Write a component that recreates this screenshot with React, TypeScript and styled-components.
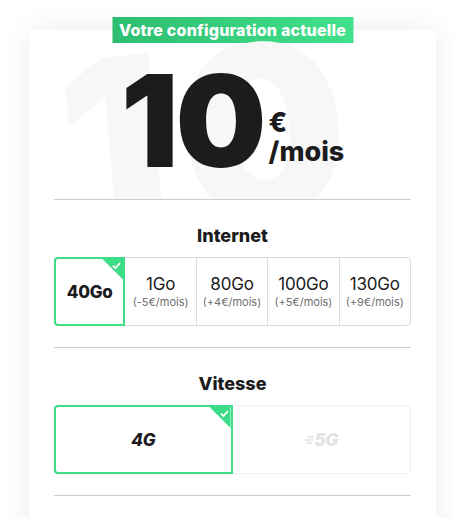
import styled, { createGlobalStyle } from "styled-components";

const GREEN = "#3ddc86";

const GlobalStyle = createGlobalStyle`
  body {
    margin: 0;
    background: #ffffff;
    font-family: Inter, "Noto Sans", sans-serif;
    color: #1c1b1d;
  }
`;

const Page = styled.div`
  padding: 30px 16px 0 29px;
`;

const Card = styled.div`
  position: relative;
  background: #ffffff;
  box-shadow: 0 0 28px rgba(0, 0, 0, 0.08);
  padding: 0 25px 40px;
`;

const Badge = styled.div`
  position: absolute;
  top: -13px;
  left: 50%;
  transform: translateX(-50%);
  height: 26px;
  padding: 0 7px;
  display: flex;
  align-items: center;
  white-space: nowrap;
  background: linear-gradient(90deg, #2ebd70, #41e28c);
  color: #ffffff;
  font-size: 16px;
  font-weight: 800;
  letter-spacing: 0.2px;
`;

const Header = styled.div`
  position: relative;
  height: 170px;
  overflow: hidden;
  border-bottom: 1px solid #cdcdcd;
  display: flex;
  justify-content: center;
  align-items: flex-start;
  padding-top: 27px;
  box-sizing: border-box;
`;

const Watermark = styled.div`
  position: absolute;
  top: -14px;
  left: 6px;
  font-size: 236px;
  line-height: 1;
  font-weight: 900;
  letter-spacing: 12px;
  color: #f7f7f7;
  transform: rotate(-5deg);
  user-select: none;
`;

const Price = styled.div`
  position: relative;
  display: flex;
  align-items: flex-end;
  gap: 5px;
`;

const Amount = styled.span`
  font-size: 128px;
  line-height: 1;
  font-weight: 900;
  letter-spacing: -3px;
`;

const Suffix = styled.div`
  display: flex;
  flex-direction: column;
  font-size: 27px;
  line-height: 29px;
  font-weight: 800;
  margin-bottom: 19px;
`;

const Section = styled.div`
  display: flex;
  flex-direction: column;
  align-items: stretch;
  padding: 25px 0 21px;
  border-bottom: 1px solid #cdcdcd;
`;

const Title = styled.h2`
  margin: 0 0 10px;
  text-align: center;
  font-size: 18px;
  line-height: 22px;
  font-weight: 800;
`;

const Group = styled.div<{ cols: number }>`
  display: grid;
  grid-template-columns: repeat(${(p) => p.cols}, 1fr);
`;

const Option = styled.div<{ selected?: boolean; disabled?: boolean }>`
  position: relative;
  height: 69px;
  box-sizing: border-box;
  display: flex;
  flex-direction: column;
  align-items: center;
  justify-content: center;
  margin-left: -1px;
  border: ${(p) =>
    p.selected
      ? `2px solid ${GREEN}`
      : `1px solid ${p.disabled ? "#f0f0f0" : "#dcdcdc"}`};
  z-index: ${(p) => (p.selected ? 1 : 0)};
  overflow: hidden;

  &:first-child {
    margin-left: 0;
    border-radius: 4px 0 0 4px;
  }
  &:last-child {
    border-radius: 0 4px 4px 0;
  }
`;

const Value = styled.span<{ bold?: boolean; italic?: boolean; muted?: boolean }>`
  display: flex;
  align-items: center;
  gap: 1px;
  font-size: 17px;
  line-height: 20px;
  font-weight: ${(p) => (p.bold ? 800 : 400)};
  font-style: ${(p) => (p.italic ? "italic" : "normal")};
  color: ${(p) => (p.muted ? "#e2e2e2" : "#1c1b1d")};
  letter-spacing: -0.2px;
`;

const Extra = styled.span`
  margin-top: 2px;
  font-size: 11px;
  line-height: 13px;
  color: #6f6f6f;
`;

const Corner = styled.div`
  position: absolute;
  top: 0;
  right: 0;
  width: 21px;
  height: 21px;
  background: ${GREEN};
  clip-path: polygon(0 0, 100% 0, 100% 100%);
  display: flex;
  justify-content: flex-end;
  padding: 3px 2px 0 0;
  box-sizing: border-box;
`;

const Check = () => (
  <svg width="9" height="7" viewBox="0 0 9 7">
    <path d="M1 3.6 L3.4 6 L8 1.2" fill="none" stroke="#fff" strokeWidth="1.8" />
  </svg>
);

const Speed = () => (
  <svg width="9" height="10" viewBox="0 0 9 10">
    <path d="M2 2h7M0 5h8M1 8h6" stroke="#e2e2e2" strokeWidth="1.4" />
  </svg>
);

const internet = [
  { label: "40Go", extra: "", selected: true },
  { label: "1Go", extra: "(-5€/mois)" },
  { label: "80Go", extra: "(+4€/mois)" },
  { label: "100Go", extra: "(+5€/mois)" },
  { label: "130Go", extra: "(+9€/mois)" },
];

export default function App() {
  return (
    <Page>
      <GlobalStyle />
      <Card>
        <Badge>Votre configuration actuelle</Badge>
        <Header>
          <Watermark>10</Watermark>
          <Price>
            <Amount>10</Amount>
            <Suffix>
              <span>€</span>
              <span>/mois</span>
            </Suffix>
          </Price>
        </Header>

        <Section>
          <Title>Internet</Title>
          <Group cols={5}>
            {internet.map((o) => (
              <Option key={o.label} selected={o.selected}>
                <Value bold={o.selected}>{o.label}</Value>
                {o.extra && <Extra>{o.extra}</Extra>}
                {o.selected && (
                  <Corner>
                    <Check />
                  </Corner>
                )}
              </Option>
            ))}
          </Group>
        </Section>

        <Section>
          <Title>Vitesse</Title>
          <Group cols={2}>
            <Option selected>
              <Value bold italic>4G</Value>
              <Corner>
                <Check />
              </Corner>
            </Option>
            <Option disabled>
              <Value bold italic muted>
                <Speed />
                5G
              </Value>
            </Option>
          </Group>
        </Section>
      </Card>
    </Page>
  );
}
